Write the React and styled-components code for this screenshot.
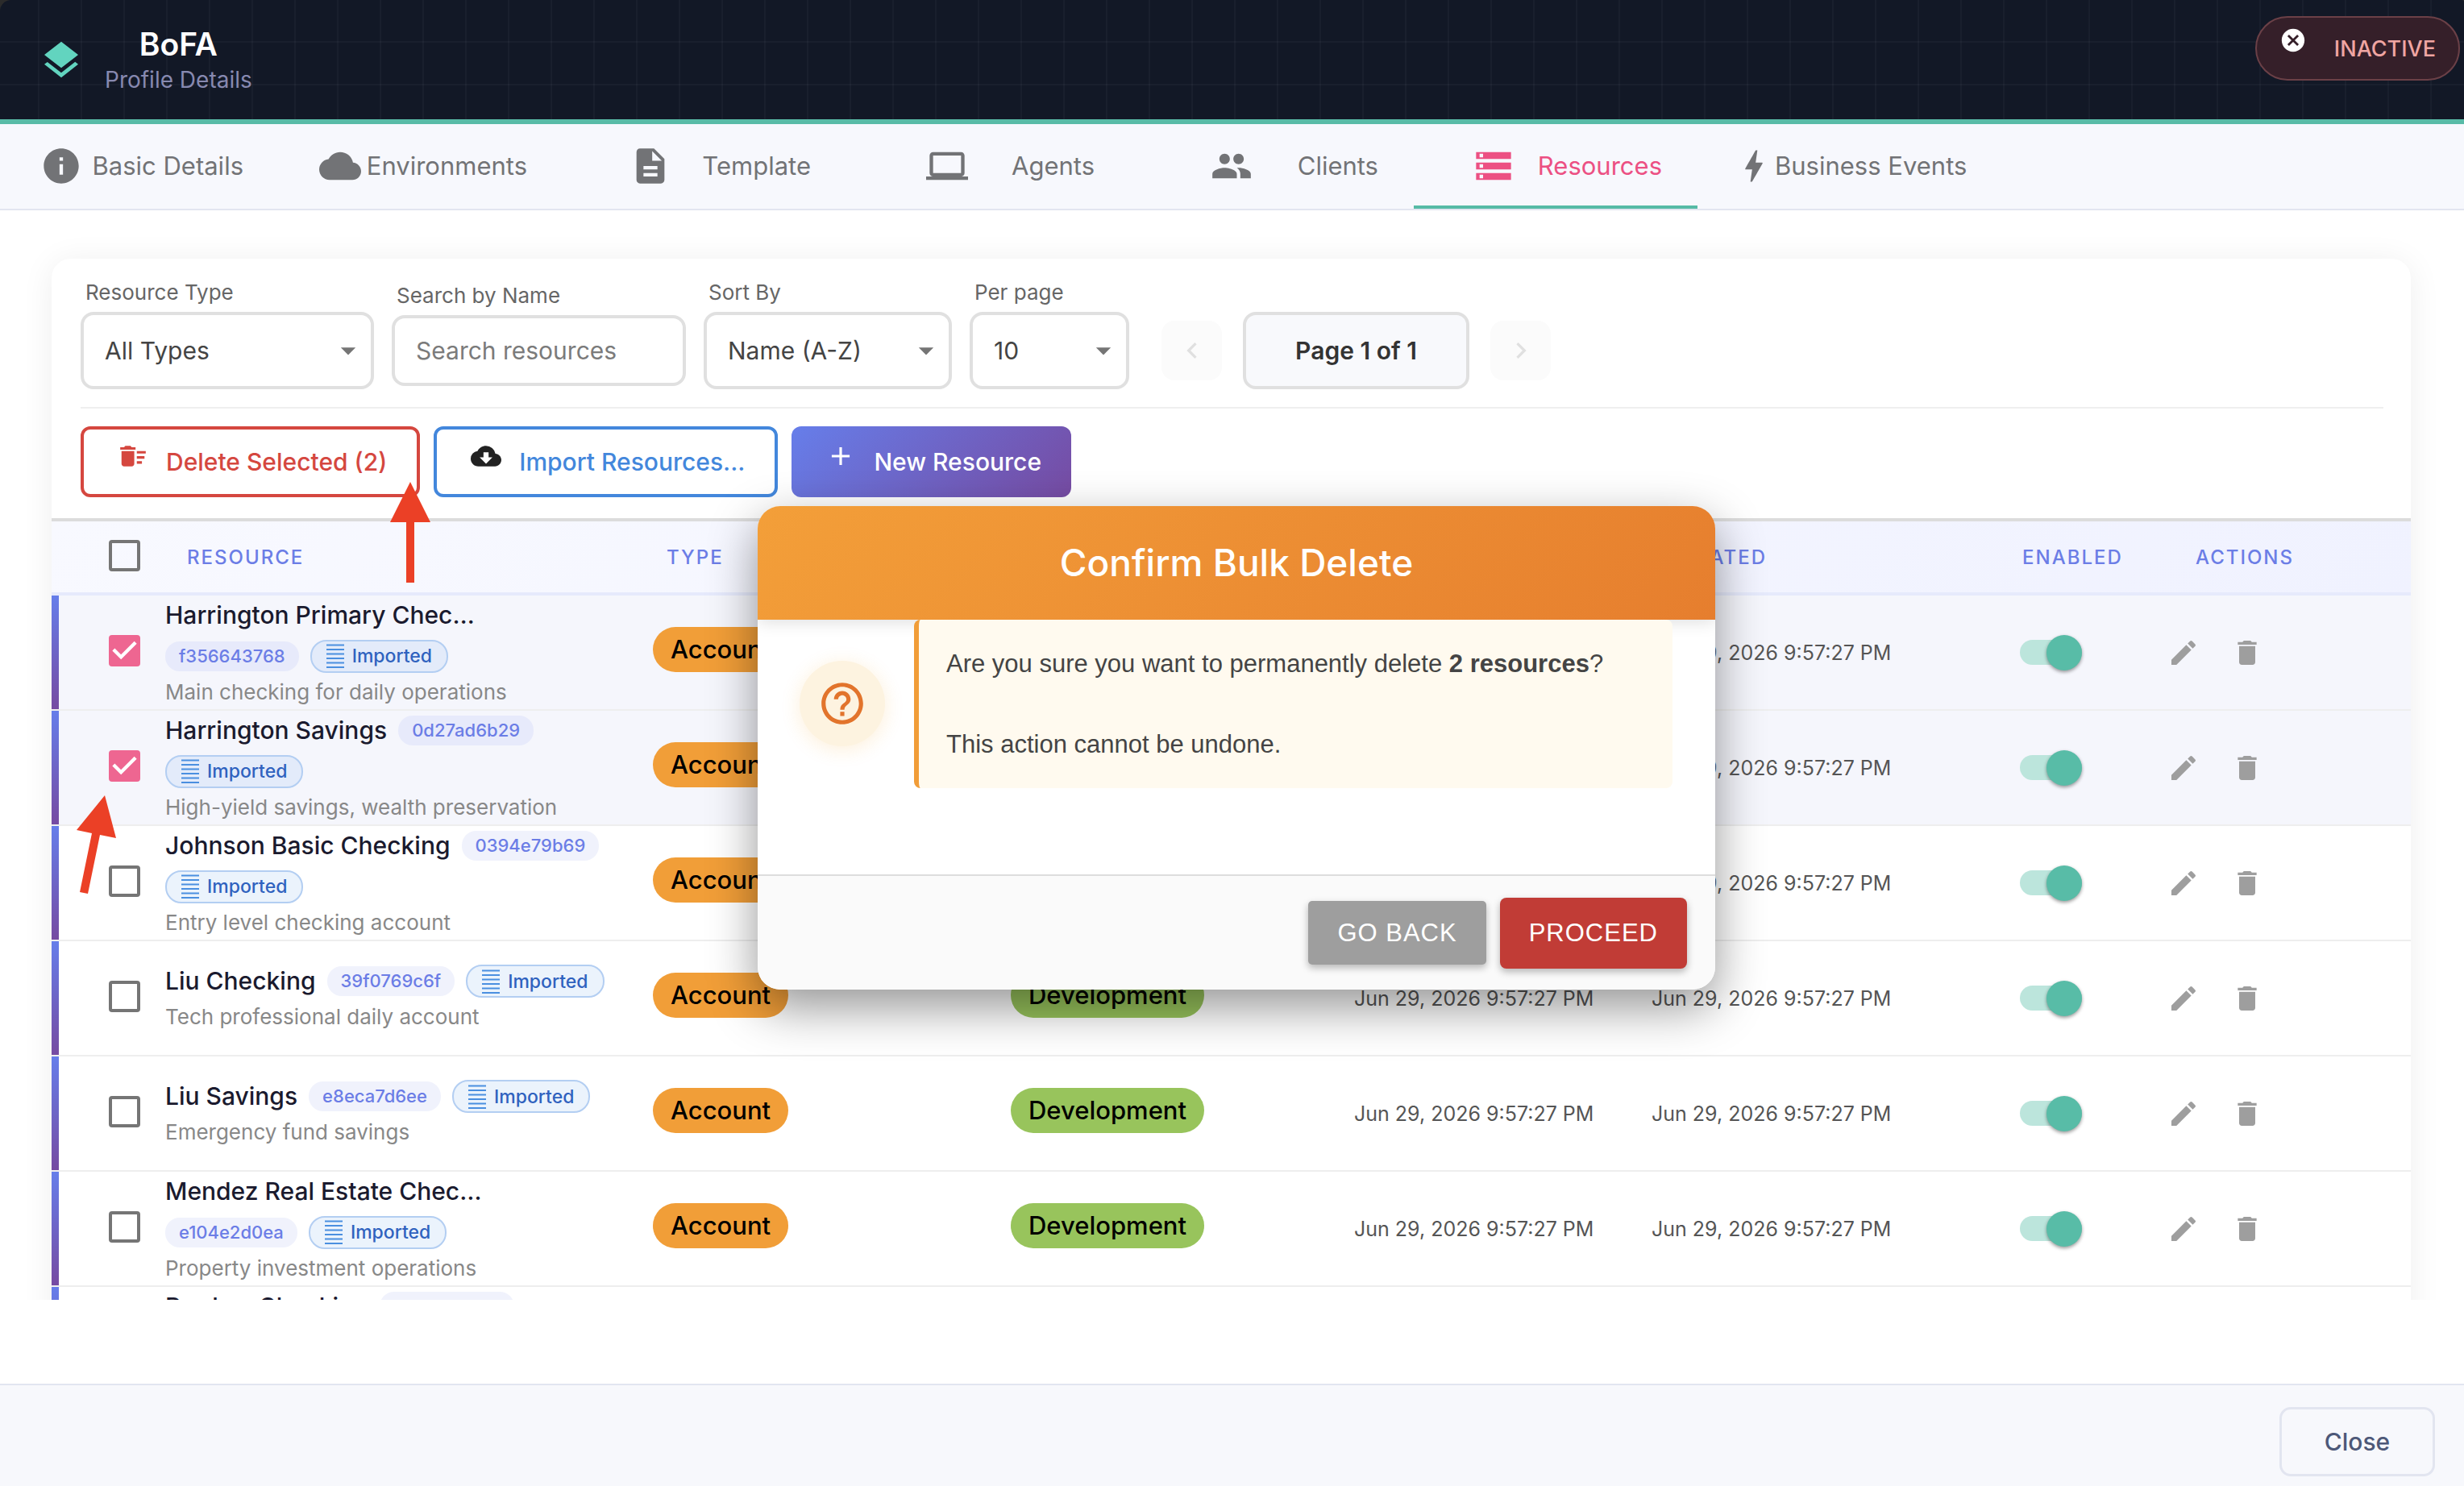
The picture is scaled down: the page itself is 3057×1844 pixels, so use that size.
// App.jsx
import React, { useState } from "react";
import styled, { createGlobalStyle, css } from "styled-components";
import {
  MdAdd,
  MdArrowDropDown,
  MdBolt,
  MdCancel,
  MdChevronLeft,
  MdChevronRight,
  MdCloud,
  MdCloudDownload,
  MdDelete,
  MdDeleteSweep,
  MdDescription,
  MdEdit,
  MdHelpOutline,
  MdInfo,
  MdLaptop,
  MdLayers,
  MdPeople,
  MdStorage,
} from "react-icons/md";

const GlobalStyle = createGlobalStyle`
  *, *::before, *::after { box-sizing: border-box; }
  body {
    margin: 0;
    background: #2b2b2b;
    font-family: Inter, "Liberation Sans", sans-serif;
    color: #444;
  }
  button, input, select { font-family: inherit; margin: 0; }
  button { cursor: pointer; }
  svg { display: block; flex: none; }
`;

const Page = styled.div`
  position: relative;
  display: flex;
  flex-direction: column;
  height: 100vh;
  overflow: hidden;
`;

/* Header */
const Header = styled.header`
  display: flex;
  align-items: flex-start;
  justify-content: space-between;
  height: 154px;
  padding: 20px 5px 0 48px;
  border-bottom: 6px solid #58bba7;
  border-radius: 14px 3px 0 0;
  background-color: #121826;
  background-image:
    linear-gradient(90deg, rgba(255, 255, 255, 0.03) 2px, transparent 2px),
    linear-gradient(rgba(255, 255, 255, 0.03) 2px, transparent 2px);
  background-size: 53px 53px;
  background-position: 47px 51px;
`;

const Brand = styled.div`
  display: flex;
  align-items: center;
  gap: 26px;
  padding-top: 11px;
  color: #62d4bf;
`;

const BrandText = styled.div`
  text-align: center;
`;

const Title = styled.h1`
  margin: 0;
  font-size: 39px;
  line-height: 48px;
  font-weight: 600;
  color: #fff;
`;

const Subtitle = styled.p`
  margin: 0;
  font-size: 28px;
  line-height: 40px;
  color: #8789b0;
`;

const StatusBadge = styled.span`
  display: flex;
  align-items: center;
  gap: 34px;
  height: 80px;
  padding: 0 28px;
  border: 2px solid #6b4047;
  border-radius: 40px;
  background: #351f29;
  font-size: 27px;
  font-weight: 500;
  color: #f0a5a2;

  svg {
    margin-bottom: 20px;
    color: #fff;
  }
`;

/* Tabs */
const TabBar = styled.nav`
  display: flex;
  flex: none;
  height: 107px;
  border-bottom: 2px solid #e3e5f0;
  background: #f7f8fd;
  overflow: hidden;
`;

const Tab = styled.button`
  display: flex;
  align-items: center;
  width: ${props => (props.$auto ? "auto" : "352px")};
  padding: 2px 44px 0;
  border: none;
  border-bottom: 4px solid ${props => (props.$active ? "#56bba6" : "transparent")};
  background: transparent;
  font-size: 31px;
  white-space: nowrap;
  color: ${props => (props.$active ? "#ec5083" : "#727376")};

  &:first-child {
    width: 346px;
    padding-left: 38px;
  }
`;

const TabIcon = styled.span`
  display: flex;
  flex: 1;
  justify-content: center;
`;

/* Content area */
const Main = styled.main`
  flex: 1;
  min-height: 0;
  padding-bottom: 104px;
  background: #fff;
`;

const Scroller = styled.div`
  height: 100%;
  padding: 60px 66px 0 64px;
  overflow: hidden;
`;

const Card = styled.section`
  border-radius: 24px;
  background: #fff;
  box-shadow: 0 4px 40px rgba(0, 0, 0, 0.07);
  overflow: hidden;
`;

const Toolbar = styled.div`
  padding: 24px 34px 26px 36px;
`;

const Filters = styled.div`
  display: flex;
  align-items: center;
  gap: 22px;
  padding-bottom: 22px;
  border-bottom: 2px solid #efefef;
`;

const Field = styled.label`
  display: flex;
  flex-direction: column;
  gap: 6px;
  width: ${props => props.$width}px;
`;

const FieldLabel = styled.span`
  padding-left: 6px;
  font-size: 26px;
  line-height: 36px;
  color: #666;
`;

const controlBox = css`
  width: 100%;
  border: 4px solid #e0e0e0;
  border-radius: 16px;
  background: #fff;
  font-size: 30px;
  color: #444;
  outline: none;
`;

const SelectWrap = styled.span`
  display: grid;
  align-items: center;

  > * { grid-area: 1 / 1; }

  svg {
    justify-self: end;
    margin-right: 10px;
    color: #757575;
    pointer-events: none;
  }
`;

const Select = styled.select`
  ${controlBox}
  height: 96px;
  padding: 0 54px 0 26px;
  appearance: none;
`;

const SearchInput = styled.input`
  ${controlBox}
  height: 88px;
  padding: 0 26px;

  &::placeholder {
    color: #7b7b7b;
    opacity: 1;
  }
`;

const Pager = styled.div`
  display: flex;
  align-items: center;
  gap: 26px;
  margin: 42px 0 0 18px;
`;

const PagerButton = styled.button`
  display: flex;
  align-items: center;
  justify-content: center;
  width: 75px;
  height: 74px;
  border: none;
  border-radius: 16px;
  background: #fbfbfb;
  color: #e0e0e0;
`;

const PageInfo = styled.span`
  width: 281px;
  height: 96px;
  border: 4px solid #e0e0e0;
  border-radius: 16px;
  background: #f8f9fc;
  font-size: 30px;
  font-weight: 600;
  line-height: 88px;
  text-align: center;
  color: #333;
`;

const Actions = styled.div`
  display: flex;
  gap: 17px;
  padding-top: 22px;
`;

const ActionButton = styled.button`
  display: flex;
  align-items: center;
  gap: 22px;
  height: 88px;
  padding: 0 37px 0 42px;
  border: 4px solid ${props => props.$color};
  border-radius: 12px;
  background: #fff;
  font-size: 30px;
  font-weight: 500;
  white-space: nowrap;
  color: ${props => props.$color};

  svg {
    margin-bottom: 14px;
    color: ${props => props.$iconColor || "inherit"};
  }

  ${props => props.$filled && css`
    border: none;
    background: linear-gradient(135deg, #667eea 0%, #764ba2 100%);
    color: #fff;
  `}
`;

/* Table */
const Table = styled.table`
  width: 100%;
  table-layout: fixed;
  border-collapse: separate;
  border-spacing: 0;
`;

const HeadRow = styled.tr`
  background: linear-gradient(135deg, #f8f9ff 0%, #f0f2ff 100%);
`;

const Th = styled.th`
  height: 96px;
  padding: 0 0 0 ${props => props.$indent || 0}px;
  border-top: 4px solid #dcdcdc;
  border-bottom: 4px solid #e6eafc;
  font-size: 24px;
  font-weight: 500;
  letter-spacing: 2px;
  text-align: left;
  text-transform: uppercase;
  color: #6b7de6;
`;

const Row = styled.tr`
  background: ${props => (props.$selected ? "#f5f6fc" : "#fff")};
`;

const Td = styled.td`
  height: 143px;
  padding: 0;
  border-bottom: 2px solid #eeeeee;
  font-size: 25px;
  white-space: nowrap;
  color: #555;
`;

/* Ячейка с цветной полосой слева */
const BarTd = styled(Td)`
  padding-left: 71px;
  background: linear-gradient(#667eea, #764ba2) left top / 9px 100% no-repeat padding-box;
`;

const CheckWrap = styled.span`
  display: inline-grid;
  place-items: center;
  margin-bottom: 4px;
  vertical-align: middle;

  > * { grid-area: 1 / 1; }

  svg {
    pointer-events: none;
  }
`;

const CheckInput = styled.input`
  width: 39px;
  height: 39px;
  border: 4px solid #757575;
  border-radius: 4px;
  appearance: none;
  background: transparent;

  &:checked {
    border-color: #ee6691;
    background: #ee6691;
  }
`;

const Cell = styled.div`
  display: flex;
  flex-direction: column;
  gap: 6px;
  width: 556px;
`;

const NameLine = styled.div`
  display: flex;
  flex-wrap: wrap;
  align-items: center;
  gap: 10px 14px;
`;

const Name = styled.span`
  font-size: 30px;
  font-weight: 500;
  line-height: 41px;
  color: #1a1a2e;
`;

const IdChip = styled.code`
  padding: 0 17px;
  border-radius: 18px;
  background: ${props => (props.$selected ? "#e7eafb" : "#f0f2fc")};
  font-family: inherit;
  font-size: 22px;
  font-weight: 500;
  line-height: 37px;
  color: #6b7de6;
`;

const ImportedChip = styled.span`
  display: flex;
  align-items: center;
  gap: 10px;
  height: 41px;
  padding: 0 18px;
  border: 2px solid #b3cef2;
  border-radius: 20px;
  background: ${props => (props.$selected ? "#e3ebfa" : "#ebf3fc")};
  font-size: 23px;
  font-weight: 500;
  color: #2f62bf;
`;

const Description = styled.span`
  font-size: 26px;
  line-height: 36px;
  color: #888;
`;

const Tag = styled.span`
  display: inline-block;
  margin-bottom: 8px;
  padding: 0 22px;
  border-radius: 28px;
  background: ${props => props.$color};
  font-size: 31px;
  font-weight: 500;
  line-height: 56px;
  vertical-align: middle;
  color: #000;
`;

const Switch = styled.input`
  display: flex;
  align-items: center;
  justify-content: flex-end;
  width: 77px;
  height: 31px;
  border-radius: 16px;
  appearance: none;
  background: #bce5dc;

  &::before {
    content: "";
    flex: none;
    width: 44px;
    height: 44px;
    border-radius: 50%;
    background: #58bca7;
    box-shadow: 0 2px 4px rgba(0, 0, 0, 0.4);
  }
`;

const RowActions = styled.div`
  display: flex;
  gap: 39px;
`;

const IconButton = styled.button`
  padding: 0;
  border: none;
  background: transparent;
  color: #9e9e9e;
`;

/* Footer */
const Footer = styled.footer`
  display: flex;
  justify-content: flex-end;
  flex: none;
  height: 127px;
  padding: 27px 36px 0;
  border-top: 2px solid #e2e5f0;
  background: #f7f8fc;
`;

const CloseButton = styled.button`
  width: 193px;
  height: 86px;
  border: 3px solid #e2e5f0;
  border-radius: 14px;
  background: transparent;
  font-size: 30px;
  font-weight: 500;
  color: #4d5878;
`;

/* Dialog */
const Overlay = styled.div`
  position: absolute;
  inset: 0;
  display: flex;
  align-items: center;
  justify-content: center;
  padding: 12px 0 0 11px;
`;

const Dialog = styled.div`
  width: 1188px;
  border-radius: 28px;
  background: #fff;
  box-shadow: 0 22px 60px rgba(0, 0, 0, 0.42);
  overflow: hidden;
`;

const DialogTitle = styled.h2`
  margin: 0;
  background: linear-gradient(135deg, #f39f39 0%, #e67e2e 100%);
  box-shadow: 0 2px 20px rgba(0, 0, 0, 0.14);
  font-size: 46px;
  font-weight: 500;
  line-height: 141px;
  text-align: center;
  color: #fff;
`;

const DialogBody = styled.div`
  display: flex;
  align-items: flex-start;
  gap: 36px;
  height: 316px;
  padding: 0 53px 0 52px;
`;

const DialogIcon = styled.span`
  display: flex;
  align-items: center;
  justify-content: center;
  width: 106px;
  height: 106px;
  margin-top: 51px;
  border-radius: 50%;
  background: #fdf3e0;
  box-shadow: 0 4px 24px rgba(243, 156, 18, 0.16);
  color: #e2742c;
`;

const DialogMessage = styled.p`
  flex: 1;
  margin: 0;
  padding: 30px 34px 29px;
  border-left: 6px solid #f19d38;
  border-radius: 8px;
  background: #fffaef;
  font-family: "Liberation Sans", Arial, sans-serif;
  font-size: 31px;
  line-height: 50px;
  color: #444;
`;

const DialogFooter = styled.div`
  display: flex;
  align-items: center;
  justify-content: flex-end;
  gap: 17px;
  height: 143px;
  padding: 0 35px;
  border-top: 2px solid #dddddd;
  background: #fafafa;
`;

const DialogButton = styled.button`
  height: ${props => (props.$danger ? "88px" : "79px")};
  padding: 0 36px;
  border: none;
  border-radius: ${props => (props.$danger ? "8px" : "5px")};
  background: ${props => (props.$danger ? "#c13c36" : "#9e9e9e")};
  box-shadow: 0 4px 10px rgba(0, 0, 0, 0.28);
  font-family: "Liberation Sans", Arial, sans-serif;
  font-size: 31px;
  letter-spacing: 1px;
  text-transform: uppercase;
  color: #fff;
`;

/* Стрелки-подсказки поверх страницы */
const Pointer = styled.svg`
  position: absolute;
  top: ${props => props.$top}px;
  left: ${props => props.$left}px;
  pointer-events: none;
`;

const tabs = [
  { label: "Basic Details", Icon: MdInfo },
  { label: "Environments", Icon: MdCloud },
  { label: "Template", Icon: MdDescription },
  { label: "Agents", Icon: MdLaptop },
  { label: "Clients", Icon: MdPeople },
  { label: "Resources", Icon: MdStorage },
  { label: "Business Events", Icon: MdBolt },
];

const columns = [
  { label: "Resource", width: 605, indent: 27 },
  { label: "Type", width: 444, indent: 17 },
  { label: "Environment", width: 426, indent: 17 },
  { label: "Created", width: 369, indent: 17 },
  { label: "Updated", width: 457, indent: 17 },
  { label: "Enabled", width: 183, indent: 3 },
  { label: "Actions", indent: 35 },
];

const resources = [
  { id: "f356643768", name: "Harrington Primary Chec…", text: "Main checking for daily operations" },
  { id: "0d27ad6b29", name: "Harrington Savings", text: "High-yield savings, wealth preservation" },
  { id: "0394e79b69", name: "Johnson Basic Checking", text: "Entry level checking account" },
  { id: "39f0769c6f", name: "Liu Checking", text: "Tech professional daily account" },
  { id: "e8eca7d6ee", name: "Liu Savings", text: "Emergency fund savings" },
  { id: "e104e2d0ea", name: "Mendez Real Estate Chec…", text: "Property investment operations" },
  { id: "da687d5d52", name: "Pardew Checking", text: "Everyday checking account" },
];

const stamp = "Jun 29, 2026 9:57:27 PM";

function Checkbox({ label, checked, onChange }) {
  return (
    <CheckWrap>
      <CheckInput type="checkbox" aria-label={label} checked={checked} onChange={onChange} />
      {checked && (
        <svg width="39" height="39" viewBox="3 3 18 18" fill="#fff">
          <path d="M10 17l-5-5 1.41-1.41L10 14.17l7.59-7.59L19 8z" />
        </svg>
      )}
    </CheckWrap>
  );
}

function ListIcon() {
  return (
    <svg width="22" height="30" viewBox="0 0 22 30" stroke="#4a8fe0" strokeWidth="2">
      <path d="M0 1.5h22M0 7h22M0 12.5h22M0 18h22M0 23.5h22M0 29h22" />
    </svg>
  );
}

function SelectField({ label, width, options }) {
  return (
    <Field $width={width}>
      <FieldLabel>{label}</FieldLabel>
      <SelectWrap>
        <Select>
          {options.map(option => <option key={option}>{option}</option>)}
        </Select>
        <MdArrowDropDown size={44} />
      </SelectWrap>
    </Field>
  );
}

export default function App() {
  const [selected, setSelected] = useState(["f356643768", "0d27ad6b29"]);
  const [open, setOpen] = useState(true);

  const toggle = id =>
    setSelected(list => (list.includes(id) ? list.filter(v => v !== id) : [...list, id]));

  const allSelected = selected.length === resources.length;

  return (
    <Page>
      <GlobalStyle />
      <Header>
        <Brand>
          <MdLayers size={56} />
          <BrandText>
            <Title>BoFA</Title>
            <Subtitle>Profile Details</Subtitle>
          </BrandText>
        </Brand>
        <StatusBadge>
          <MdCancel size={34} />
          INACTIVE
        </StatusBadge>
      </Header>

      <TabBar>
        {tabs.map(({ label, Icon }) => (
          <Tab key={label} $active={label === "Resources"} $auto={label === "Business Events"}>
            <TabIcon><Icon size={52} /></TabIcon>
            {label}
          </Tab>
        ))}
      </TabBar>

      <Main>
        <Scroller>
          <Card>
            <Toolbar>
              <Filters>
                <SelectField label="Resource Type" width={364} options={["All Types", "Account"]} />
                <Field $width={365}>
                  <FieldLabel>Search by Name</FieldLabel>
                  <SearchInput type="text" placeholder="Search resources" />
                </Field>
                <SelectField label="Sort By" width={308} options={["Name (A-Z)", "Name (Z-A)"]} />
                <SelectField label="Per page" width={198} options={["10", "25", "50"]} />
                <Pager>
                  <PagerButton disabled aria-label="Previous page"><MdChevronLeft size={40} /></PagerButton>
                  <PageInfo>Page 1 of 1</PageInfo>
                  <PagerButton disabled aria-label="Next page"><MdChevronRight size={40} /></PagerButton>
                </Pager>
              </Filters>
              <Actions>
                <ActionButton $color="#d5473f" onClick={() => setOpen(true)}>
                  <MdDeleteSweep size={38} />
                  Delete Selected ({selected.length})
                </ActionButton>
                <ActionButton $color="#4387dc" $iconColor="#222">
                  <MdCloudDownload size={38} />
                  Import Resources...
                </ActionButton>
                <ActionButton $filled>
                  <MdAdd size={38} />
                  New Resource
                </ActionButton>
              </Actions>
            </Toolbar>

            <Table>
              <colgroup>
                <col width="141" />
                {columns.map(col => <col key={col.label} width={col.width} />)}
              </colgroup>
              <thead>
                <HeadRow>
                  <Th $indent={71}>
                    <Checkbox
                      label="Select all"
                      checked={allSelected}
                      onChange={() => setSelected(allSelected ? [] : resources.map(r => r.id))}
                    />
                  </Th>
                  {columns.map(col => <Th key={col.label} $indent={col.indent}>{col.label}</Th>)}
                </HeadRow>
              </thead>
              <tbody>
                {resources.map(item => {
                  const isSelected = selected.includes(item.id);
                  return (
                    <Row key={item.id} $selected={isSelected}>
                      <BarTd>
                        <Checkbox
                          label={`Select ${item.name}`}
                          checked={isSelected}
                          onChange={() => toggle(item.id)}
                        />
                      </BarTd>
                      <Td>
                        <Cell>
                          <NameLine>
                            <Name>{item.name}</Name>
                            <IdChip $selected={isSelected}>{item.id}</IdChip>
                            <ImportedChip $selected={isSelected}><ListIcon />Imported</ImportedChip>
                          </NameLine>
                          <Description>{item.text}</Description>
                        </Cell>
                      </Td>
                      <Td><Tag $color="#f19e38">Account</Tag></Td>
                      <Td><Tag $color="#98c45c">Development</Tag></Td>
                      <Td>{stamp}</Td>
                      <Td>{stamp}</Td>
                      <Td><Switch type="checkbox" role="switch" aria-label="Enabled" defaultChecked /></Td>
                      <Td>
                        <RowActions>
                          <IconButton aria-label="Edit"><MdEdit size={40} /></IconButton>
                          <IconButton aria-label="Delete"><MdDelete size={40} /></IconButton>
                        </RowActions>
                      </Td>
                    </Row>
                  );
                })}
              </tbody>
            </Table>
          </Card>
        </Scroller>
      </Main>

      <Footer>
        <CloseButton>Close</CloseButton>
      </Footer>

      {open && (
        <Overlay>
          <Dialog role="dialog" aria-labelledby="dialog-title">
            <DialogTitle id="dialog-title">Confirm Bulk Delete</DialogTitle>
            <DialogBody>
              <DialogIcon><MdHelpOutline size={62} /></DialogIcon>
              <DialogMessage>
                Are you sure you want to permanently delete <b>{selected.length} resources</b>?
                <br />
                <br />
                This action cannot be undone.
              </DialogMessage>
            </DialogBody>
            <DialogFooter>
              <DialogButton onClick={() => setOpen(false)}>Go back</DialogButton>
              <DialogButton $danger onClick={() => setOpen(false)}>Proceed</DialogButton>
            </DialogFooter>
          </Dialog>
        </Overlay>
      )}

      <Pointer $top={598} $left={484} width="50" height="126" viewBox="0 0 50 126" fill="#eb4026">
        <path d="M25 0l25 50H30v75H20V50H0z" />
      </Pointer>
      <Pointer $top={987} $left={95} width="50" height="123" viewBox="0 0 50 123" fill="#eb4026">
        <path d="M35 0l14 53-20-4-15 73-10-2 15-73-19-4z" />
      </Pointer>
    </Page>
  );
}
